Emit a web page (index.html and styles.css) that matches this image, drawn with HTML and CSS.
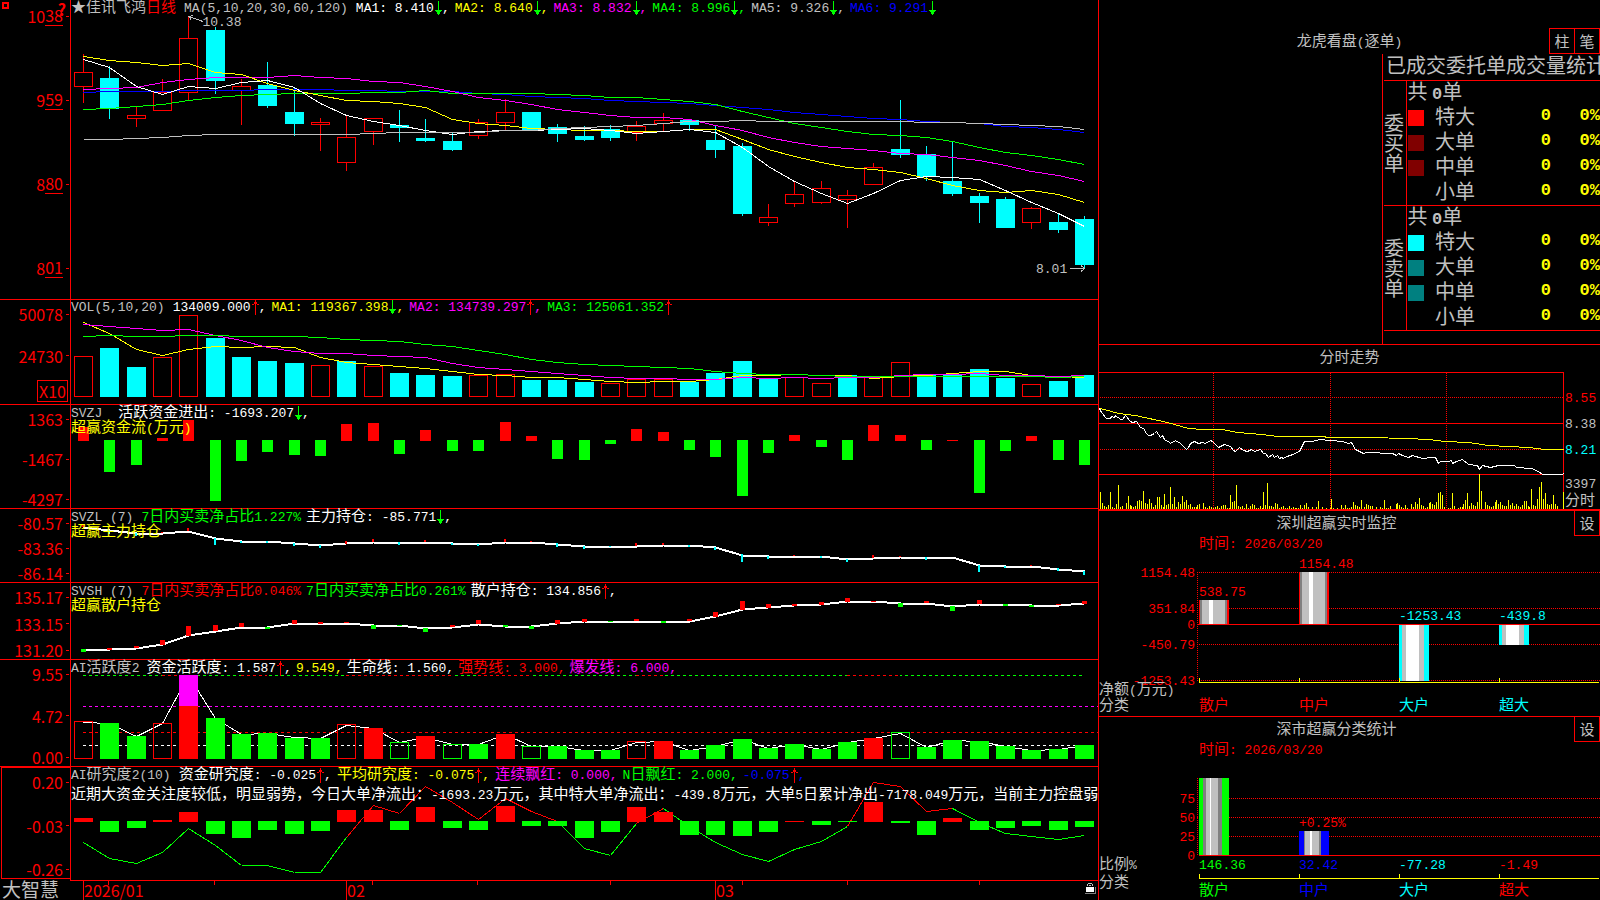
FILE: index.html
```html
<!DOCTYPE html>
<html lang="zh-CN">
<head>
<meta charset="utf-8">
<title>佳讯飞鸿 日线</title>
<link rel="stylesheet" href="styles.css">
</head>
<body>
<svg class="defs" aria-hidden="true">
  <symbol id="down" viewBox="0 0 8 15"><path class="s-green" d="M4.5 0V14M1 9.5H8M2 10.5H7M3 11.5H6M3 12.5H6"/></symbol>
  <symbol id="up" viewBox="0 0 8 15"><path class="s-red" d="M4.5 0V15M3 2.500H6M3 3.500H6M1 4.500H3M6 4.500H8"/></symbol>
</svg>
<div class="screen">
  <main class="charts">
    <section class="panel">
      <div class="axis axis-main">
        <span class="pin"></span><span class="help">?</span>
        <span class="tick low">10<u>38</u></span><span class="tick low">9<u>59</u></span><span class="tick low">8<u>80</u></span><span class="tick low">8<u>01</u></span>
      </div>
      <div class="plot">
        <svg id="kline" viewBox="71 0 1027 299" preserveAspectRatio="none"></svg>
        <div class="head">
          <div class="row"><span class="title silver"><span class="zh">★佳讯飞鸿<span class="red">日线</span></span></span>
            <span class="title silver">MA(5,10,20,30,60,120)</span>
            <span class="white">MA1: 8.410<svg class="arrow"><use href="#down"/></svg>,</span>
            <span class="yellow">MA2: 8.640<svg class="arrow"><use href="#down"/></svg>,</span>
            <span class="magenta">MA3: 8.832<svg class="arrow"><use href="#down"/></svg>,</span>
            <span class="green">MA4: 8.996<svg class="arrow"><use href="#down"/></svg>,</span>
            <span class="silver">MA5: 9.326<svg class="arrow"><use href="#down"/></svg>,</span>
            <span class="blue">MA6: 9.291<svg class="arrow"><use href="#down"/></svg></span></div>
        </div>
        <span class="mark mark-high">10.38</span>
        <span class="mark mark-low">8.01</span>
      </div>
    </section>

    <section class="panel line">
      <div class="axis axis-vol"><span class="tick">50078</span><span class="tick">24730</span><span class="unit">X10</span></div>
      <div class="plot">
        <svg id="vol" viewBox="71 300 1027 104" preserveAspectRatio="none"></svg>
        <div class="head">
          <div class="row row-latin"><span class="title silver">VOL(5,10,20)</span>
            <span class="white">134009.000<svg class="arrow"><use href="#up"/></svg>,</span>
            <span class="yellow">MA1: 119367.398<svg class="arrow"><use href="#down"/></svg>,</span>
            <span class="magenta">MA2: 134739.297<svg class="arrow"><use href="#up"/></svg>,</span>
            <span class="green">MA3: 125061.352<svg class="arrow"><use href="#up"/></svg></span></div>
        </div>
      </div>
    </section>

    <section class="panel line">
      <div class="axis"><span class="tick">1363</span><span class="tick">-1467</span><span class="tick">-4297</span></div>
      <div class="plot">
        <svg id="flow" viewBox="71 405 1027 103" preserveAspectRatio="none"></svg>
        <div class="head">
          <div class="row"><span class="title wide silver">SVZJ</span>
            <span class="white"><span class="zh">活跃资金进出</span>: -1693.207<svg class="arrow"><use href="#down"/></svg>,</span></div>
          <div class="row yellow"><span><span class="zh">超赢资金流</span>(<span class="zh">万元</span>)</span></div>
        </div>
      </div>
    </section>

    <section class="panel line">
      <div class="axis"><span class="tick">-80.57</span><span class="tick">-83.36</span><span class="tick">-86.14</span></div>
      <div class="plot">
        <svg id="hold" viewBox="71 509 1027 73" preserveAspectRatio="none"></svg>
        <div class="head">
          <div class="row"><span class="title silver">SVZL (7)</span>
            <span class="green">7<span class="zh">日内买卖净占比</span>1.227%</span>
            <span class="white"><span class="zh">主力持仓</span>: -85.771<svg class="arrow"><use href="#down"/></svg>,</span></div>
          <div class="row yellow"><span class="zh">超赢主力持仓</span></div>
        </div>
      </div>
    </section>

    <section class="panel line">
      <div class="axis"><span class="tick">135.17</span><span class="tick">133.15</span><span class="tick">131.20</span></div>
      <div class="plot">
        <svg id="retail" viewBox="71 583 1027 76" preserveAspectRatio="none"></svg>
        <div class="head">
          <div class="row"><span class="title silver">SVSH (7)</span>
            <span class="red">7<span class="zh">日内买卖净占比</span>0.046%</span>
            <span class="green">7<span class="zh">日内买卖净占比</span>0.261%</span>
            <span class="white"><span class="zh">散户持仓</span>: 134.856<svg class="arrow"><use href="#up"/></svg>,</span></div>
          <div class="row yellow"><span class="zh">超赢散户持仓</span></div>
        </div>
      </div>
    </section>

    <section class="panel line">
      <div class="axis"><span class="tick">9.55</span><span class="tick">4.72</span><span class="tick">0.00</span></div>
      <div class="plot">
        <svg id="active" viewBox="71 660 1027 106" preserveAspectRatio="none"></svg>
        <div class="head">
          <div class="row row-tight"><span class="title silver">AI<span class="zh">活跃度</span>2</span>
            <span class="white"><span class="zh">资金活跃度</span>: 1.587<svg class="arrow"><use href="#up"/></svg>,</span>
            <span class="yellow">9.549,</span>
            <span class="white"><span class="zh">生命线</span>: 1.560,</span>
            <span class="red"><span class="zh">强势线</span>: 3.000,</span>
            <span class="magenta"><span class="zh">爆发线</span>: 6.000,</span></div>
        </div>
      </div>
    </section>

    <section class="panel line">
      <div class="axis axis-study"><span class="tick">0.20</span><span class="tick">-0.03</span><span class="tick">-0.26</span></div>
      <div class="plot">
        <svg id="study" viewBox="71 767 1027 113" preserveAspectRatio="none"></svg>
        <div class="head head-loose">
          <div class="row"><span class="title silver">AI<span class="zh">研究度</span>2(10)</span>
            <span class="white"><span class="zh">资金研究度</span>: -0.025<svg class="arrow"><use href="#up"/></svg>,</span>
            <span class="yellow"><span class="zh">平均研究度</span>: -0.075<svg class="arrow"><use href="#up"/></svg>,</span>
            <span class="magenta"><span class="zh">连续飘红</span>: 0.000,</span>
            <span class="green">N<span class="zh">日飘红</span>: 2.000,</span>
            <span class="blue">-0.075<svg class="arrow"><use href="#up"/></svg>,</span></div>
          <p class="row white"><span><span class="zh">近期大资金关注度较低，明显弱势，今日大单净流出：</span>-1693.23<span class="zh">万元，其中特大单净流出：</span>-439.8<span class="zh">万元，大单</span>5<span class="zh">日累计净出</span>-7178.049<span class="zh">万元，当前主力控盘弱</span></span></p>
        </div>
      </div>
    </section>

    <footer class="panel">
      <div class="brand">大智慧</div>
      <div class="plot timeline">
        <svg id="dates" viewBox="71 881 1027 19" preserveAspectRatio="none"></svg>
        <div class="months"><span></span><span class="month">2026/01</span><span class="month">02</span><span class="month">03<svg class="lock" viewBox="0 0 11 12"><path class="lock-body" d="M1 5H9V10H1Z"/><path class="lock-arc" d="M2.500 4V2.500L4 1H6L7.500 2.500V4M4 3.500H6"/><path class="lock-shade" d="M0 11.500H10.500V5"/></svg></span></div>
      </div>
    </footer>
  </main>

  <aside class="side">
    <section class="orders">
      <header class="bar bar-orders"><h2 class="caption"><span class="zh">龙虎看盘</span>(<span class="zh">逐单</span>)</h2><div class="tabs"><button>柱</button><button>笔</button></div></header>
      <div class="stats">
        <h3>已成交委托单成交量统计</h3>
        <table>
          <colgroup><col class="col-group"><col class="col-chip"><col class="col-name"><col class="col-count"><col class="col-rate"></colgroup>
          <tbody>
            <tr><th class="group" rowspan="5" scope="rowgroup">委买单</th><td class="sum" colspan="4">共 <b>0</b>单</td></tr>
            <tr><td><i class="chip c-red"></i></td><th scope="row">特大</th><td class="num">0</td><td class="num">0%</td></tr>
            <tr><td><i class="chip c-maroon"></i></td><th scope="row">大单</th><td class="num">0</td><td class="num">0%</td></tr>
            <tr><td><i class="chip c-maroon"></i></td><th scope="row">中单</th><td class="num">0</td><td class="num">0%</td></tr>
            <tr><td></td><th scope="row">小单</th><td class="num">0</td><td class="num">0%</td></tr>
          </tbody>
          <tbody>
            <tr><th class="group" rowspan="5" scope="rowgroup">委卖单</th><td class="sum" colspan="4">共 <b>0</b>单</td></tr>
            <tr><td><i class="chip c-cyan"></i></td><th scope="row">特大</th><td class="num">0</td><td class="num">0%</td></tr>
            <tr><td><i class="chip c-teal"></i></td><th scope="row">大单</th><td class="num">0</td><td class="num">0%</td></tr>
            <tr><td><i class="chip c-teal"></i></td><th scope="row">中单</th><td class="num">0</td><td class="num">0%</td></tr>
            <tr><td></td><th scope="row">小单</th><td class="num">0</td><td class="num">0%</td></tr>
          </tbody>
        </table>
      </div>
    </section>

    <section class="box line">
      <header class="bar bar-set"><h2 class="caption zh">分时走势</h2></header>
      <svg id="intraday" viewBox="1099 370 501 139"></svg>
    </section>

    <section class="box line line-thick">
      <header class="bar bar-set"><h2 class="caption zh">深圳超赢实时监控</h2><button>设</button></header>
      <svg id="monitor" viewBox="1099 536 501 180"></svg>
    </section>

    <section class="box line">
      <header class="bar bar-set"><h2 class="caption zh">深市超赢分类统计</h2><button>设</button></header>
      <svg id="stat" viewBox="1099 742 501 158"></svg>
    </section>
  </aside>
</div>
<script src="charts.js"></script>
</body>
</html>
```
FILE: styles.css
```css
* { box-sizing: border-box; }
body {
  margin: 0;
  background: #000;
  color: #c0c0c0;
  font: 13px/15px "Liberation Mono", "Noto Sans CJK SC", monospace;
}
h2, h3, p { margin: 0; font-weight: normal; }
button {
  width: 26px;
  height: 26px;
  padding: 0;
  border: 1px solid #f00;
  background: #000;
  color: #c0c0c0;
  font: 15px/20px "Noto Sans CJK SC", sans-serif;
}
button + button { margin-left: -1px; }
.defs { position: absolute; width: 0; height: 0; }
.zh { font-family: "Noto Sans CJK SC", sans-serif; font-size: 15px; }

.red { color: #f00; }
.white { color: #fff; }
.yellow { color: #ff0; }
.magenta { color: #f0f; }
.green { color: #0f0; }
.blue { color: #00f; }
.silver { color: #c0c0c0; }

.screen {
  display: grid;
  grid-template-columns: 1099fr 501fr;
  grid-template-rows: minmax(0, 1fr);
  height: 100vh;
  min-height: 880px;
  overflow: hidden;
}
.charts {
  display: grid;
  grid-template-rows: 299fr 105fr 104fr 74fr 77fr 107fr 114fr 20fr;
  min-width: 0;
  min-height: 0;
  border-right: 1px solid #f00;
}
.panel {
  display: grid;
  grid-template-columns: 70px minmax(0, 1fr);
  grid-template-rows: minmax(0, 1fr);
  min-height: 0;
}
.line { border-top: 1px solid #f00; }
.line-thick { border-top-width: 2px; }

.axis {
  position: relative;
  display: flex;
  flex-direction: column;
  justify-content: space-between;
  align-items: flex-end;
  min-height: 0;
  padding-top: 5px;
  color: #f00;
  font: 16px/18px "Noto Sans CJK SC", sans-serif;
}
.tick { display: flex; align-items: center; height: 18px; }
.tick::after { content: ""; width: 3px; height: 1px; margin: 0 1px 0 3px; background: #f00; }
.tick u { text-decoration: none; }
.low u { border-bottom: 1px solid #f00; height: 20px; }
.axis-main { padding: 7px 0 22px; }
.axis-vol { padding-bottom: 2px; }
.axis-vol .tick + .tick { margin-top: 8px; }
.axis-study { margin: 0 0 1px 1px; border: 1px solid #f00; border-right-width: 0; }
.unit { border: 1px solid #f00; padding: 1px 1px; height: 22px; margin-right: 2px; }
.pin { position: absolute; left: 2px; top: 2px; width: 7px; height: 7px; border: 2px solid #f00; }
.help { position: absolute; right: 4px; top: 0; font-weight: bold; }

.plot {
  position: relative;
  display: grid;
  grid-template-rows: minmax(0, 1fr);
  min-width: 0;
  min-height: 0;
  overflow-x: clip;
  border-left: 1px solid #f00;
}
.plot > * { grid-area: 1 / 1; }
.plot > svg { width: 100%; height: 100%; min-height: 0; }
.head { min-width: 0; }
.row { display: flex; gap: 5px; height: 15px; white-space: nowrap; align-items: baseline; line-height: 12px; }
.row-tight { gap: 4px; }
.row-latin { line-height: 16px; }
.head-loose p { margin-top: 5px; }
.title { margin-right: 3px; }
.wide { margin-right: 11px; }
.arrow { width: 8px; height: 15px; margin: -3px 0; vertical-align: -1px; }
.mark { position: absolute; color: #c0c0c0; }
.mark-high { left: 12.800%; top: 5%; }
.mark-low { right: 3%; top: 87.500%; }

.brand { font: 19px/18px "Noto Sans CJK SC", sans-serif; padding-left: 2px; }
.timeline { border-left: 0; border-top: 1px solid #f00; }
.months { display: grid; grid-template-columns: 13fr 263fr 369fr 383fr; }
.month {
  display: flex;
  justify-content: space-between;
  border-left: 1px solid #f00;
  color: #f00;
  font: 16px/18px "Noto Sans CJK SC", sans-serif;
}
.lock { width: 11px; height: 12px; margin: 1px 2px 0 0; }
.lock-body { fill: #fff; }
.lock-arc, .lock-shade { fill: none; stroke: #c0c0c0; }
.lock-shade { stroke: #808080; }

.side {
  display: grid;
  grid-template-rows: 344fr 165fr 207fr 184fr;
  min-width: 0;
  min-height: 0;
}
.caption { text-align: center; font-size: 13px; flex: 1; }
.caption.zh { font-size: 15px; }
.bar { display: flex; height: 25px; align-items: center; }
.bar-set { align-items: flex-start; }
.bar-set .caption { line-height: 22px; }
.bar-set button { margin-top: -1px; }
.bar-orders { position: relative; margin-top: 28px; height: 26px; }
.tabs { position: absolute; right: 0; top: 0; display: flex; }
.box { display: flex; flex-direction: column; min-height: 0; }
.box > svg { flex: 1; width: 100%; min-height: 0; }
.orders { display: flex; flex-direction: column; min-height: 0; }
.stats { flex: 1; width: 218px; min-height: 0; margin-left: auto; border-left: 1px solid #f00; overflow-x: clip; }
.stats h3 { padding-left: 3px; height: 26px; font: 20px/22px "Noto Sans CJK SC", sans-serif; white-space: nowrap; }
.stats table { width: 216px; margin-left: 1px; border-collapse: collapse; table-layout: fixed; font: 20px/20px "Noto Sans CJK SC", sans-serif; }
.stats tbody { border-top: 1px solid #f00; border-bottom: 1px solid #f00; }
.stats th, .stats td { padding: 0 0 4px; font-weight: normal; text-align: left; height: 25px; line-height: 20px; vertical-align: middle; white-space: nowrap; }
.col-group { width: 22px; }
.col-chip { width: 29px; }
.col-name { width: 60px; }
.col-count { width: 56px; }
.col-rate { width: 49px; }
.stats .group { padding: 0 1px 0 0; white-space: normal; border-right: 1px solid #f00; }
.stats .sum { padding-left: 1px; }
.stats b { font: bold 17px/1px "Liberation Mono", monospace; }
.stats .num { padding-bottom: 4px; color: #ff0; text-align: right; font: bold 17px/20px "Liberation Mono", monospace; }
.chip { display: block; width: 16px; height: 16px; margin-top: 3px; margin-left: 1px; }
.c-red { background: #f00; }
.c-maroon { background: #800000; }
.c-cyan { background: #0ff; }
.c-teal { background: #008080; }

svg { display: block; }
.row svg { display: inline-block; }
.plot svg *, .box svg * { shape-rendering: crispEdges; }
.s-red, .s-green, .s-blue, .s-cyan, .s-white, .s-yellow, .s-magenta, .s-silver { fill: none; stroke-width: 1; }
.s-red { stroke: #f00; }
.s-green { stroke: #0f0; }
.s-blue { stroke: #00f; }
.s-cyan { stroke: #0ff; }
.s-white { stroke: #fff; }
.s-yellow { stroke: #ff0; }
.s-magenta { stroke: #f0f; }
.s-silver { stroke: #c0c0c0; }
.thick { stroke-width: 2; }
.dash { stroke-dasharray: 3 3; }
.dot { stroke-dasharray: 1 1; }
.f-red { fill: #f00; }
.f-green { fill: #0f0; }
.f-blue { fill: #00f; }
.f-cyan { fill: #0ff; }
.f-white { fill: #fff; }
.f-magenta { fill: #f0f; }
.f-silver { fill: #c0c0c0; }
.f-gray { fill: #808080; }
.f-yellow { fill: #ff0; }
.end { text-anchor: end; }
```
FILE: charts.js
```js
// Series values are stored in thirds of a unit, relative to each chart's origin.
const X0 = 83, STEP = 26.345;
const cx = i => Math.round(X0 + STEP * i);
const list = s => s.trim().split(/\s+/);
const COLOR = { r: 'red', g: 'green', c: 'cyan', w: 'white', y: 'yellow', m: 'magenta', b: 'blue', s: 'silver', d: 'gray' };
const rect = (x, y, w, h, k) => `<rect class="f-${COLOR[k]}" x="${x}" y="${y}" width="${w}" height="${h}"/>`;
const frame = (x, y, w, h, k) => `<rect class="s-${COLOR[k]}" x="${x + 0.5}" y="${y + 0.5}" width="${w - 1}" height="${Math.max(h - 1, 1)}"/>`;
const path = (d, k, extra = '') => `<path class="s-${COLOR[k]} ${extra}" d="${d}"/>`;
const hline = (x1, x2, y, k, extra) => path(`M${x1} ${y + 0.5}H${x2}`, k, extra);
const vline = (x, y1, y2, k, extra) => path(`M${x + 0.5} ${y1}V${y2}`, k, extra);
const text = (x, y, s, k, extra = '') => {
  const body = s.replace(/[\u4e00-\u9fff]+/g, m => `<tspan class="zh">${m}</tspan>`);
  return `<text class="f-${COLOR[k]} ${extra}" x="${x}" y="${y + 4}">${body}</text>`;
};
const scale = (v, origin) => origin + Math.round(v / 3);
const curve = (values, origin, k, extra) =>
  path('M' + list(values).map((v, i) => `${cx(i) + 0.5} ${scale(v, origin) + 0.5}`).join('L'), k, extra);
const put = (id, s) => { document.getElementById(id).innerHTML = s; };

// Candles: colour, body top, body bottom, high, low
const candles = list(`r,216,260,162,309 c,234,327,198,357 r,345,356,320,381 r,276,332,237,332 r,114,278,48,300
c,90,243,80,282 r,258,272,237,375 c,255,318,186,324 c,336,372,260,408 r,366,374,354,453 r,411,488,348,513
r,354,395,354,435 c,375,384,330,426 c,414,423,357,426 c,423,450,398,453 r,366,407,357,417 r,337,368,297,391
c,336,390,336,390 c,381,402,372,426 c,408,420,378,423 c,387,414,375,423 r,378,399,363,423 r,360,372,339,395
c,360,375,357,393 c,420,450,375,474 c,438,642,429,648 r,651,669,612,678 r,582,611,543,621 r,564,608,543,612
r,585,600,570,684 r,501,554,489,554 c,447,465,300,474 c,462,530,438,543 c,543,582,423,588 c,588,609,579,669
c,597,684,591,684 r,624,668,621,687 c,666,690,642,699 c,657,795,648,806`);
let out = candles.map((s, i) => {
  const [k, ...n] = s.split(',');
  const [top, bot, hi, lo] = n.map(v => scale(v, 0));
  const x = cx(i);
  const wick = vline(x, hi, top, k) + vline(x, bot, lo, k);
  return wick + (k === 'c' ? rect(x - 9, top, 19, bot - top, k) : frame(x - 9, top, 19, bot - top, k));
}).join('');
out += curve('277 274 274 272 271 271 269 268 268 268 269 270 272 272 273 279 281 287 290 295 299 302 307 310 316 322 328 335 341 349 354 358 364 367 370 377 381 388 397', 0, 'b');
out += curve('328 323 319 313 301 292 286 281 280 280 278 277 275 271 278 280 280 280 281 284 290 292 296 302 313 333 350 370 380 392 401 406 412 422 440 455 466 478 493', 0, 'g');
out += curve('266 263 260 247 236 232 230 230 226 230 235 243 247 259 272 290 301 313 328 337 346 350 352 356 374 390 411 425 437 445 451 458 463 472 479 496 512 526 544', 0, 'm');
out += curve('169 181 187 196 190 217 223 248 269 284 300 304 310 322 357 370 376 385 388 391 391 394 394 388 388 416 448 467 485 500 508 517 535 554 571 575 571 583 607', 0, 'y');
out += curve('176 200 258 281 257 263 247 241 260 308 344 362 376 389 403 394 391 391 387 384 390 400 394 388 395 440 497 542 578 608 578 541 529 532 536 571 605 638 678', 0, 'w');
out += curve('418 416 415 411 406 403 403 402 401 401 401 400 397 397 397 396 391 391 385 382 379 374 368 364 362 361 362 364 364 364 364 364 367 367 370 373 376 379 388', 0, 's');
out += path('M188.500 16.500L203 21.500M188.500 16.500L191 19.500M188.500 16.500L193 15.500', 's');
out += path('M1070 268.500H1084M1081 265.500L1084.500 268.500L1081 271.500', 's');
put('kline', out);

// Volume
out = list(`r183 c159 c216 r186 r60 c129 c186 c198 c204 r210 c198 r213 c234 c240 c243 r240 r237 c255 c255 c261 r264 r252 r252
c261 c234 c198 c250 r247 r264 c240 r247 r201 c240 c237 c222 c249 r267 c258 c240`).map((s, i) => {
  const k = s[0], top = scale(s.slice(1), 295), x = cx(i) - 9;
  return k === 'c' ? rect(x, top, 19, 397 - top, k) : frame(x, top, 19, 397 - top, k);
}).join('');
out += curve('82 114 162 181 163 152 157 154 157 187 200 206 214 220 227 236 241 245 247 253 257 260 257 259 253 241 241 238 241 241 250 242 241 233 229 229 241 244 247', 295, 'y');
out += curve('88 92 98 106 103 119 134 156 169 175 175 179 183 187 203 217 223 229 234 240 245 250 250 253 253 247 250 247 250 247 245 241 238 236 235 241 241 244 241', 295, 'm');
out += curve('124 121 122 124 121 121 122 124 124 127 133 136 139 146 154 166 178 193 202 206 211 214 217 220 229 233 236 238 241 244 244 244 244 244 244 244 244 247 244', 295, 'g');
put('vol', out);

// Bars hanging from or standing on a zero line
const signed = (values, origin, base, width) => list(values).map((s, i) => {
  const k = s[0], v = scale(s.slice(1), origin), x = cx(i) - (width - 1) / 2;
  return k === 'r' ? rect(x, v, width, Math.max(base + 1 - v, 1), k) : rect(x, base, width, Math.max(v - base, 1), k);
}).join('');
put('flow', signed(`r396 g531 g510 r429 r375 g618 g498 g471 g480 g483 r387 r384 g477 r405 g468 g468 r381 r423 g492 g495 g447 r402 r411
g465 g486 g603 g474 r420 g456 g495 r390 r420 g465 r435 g594 g468 r423 g495 g510`, 295, 440, 11));

// Main-force holding
out = curve('695 706 714 713 707 728 737 739 745 750 745 740 741 741 745 747 741 741 747 753 753 752 750 751 757 779 783 783 783 792 788 786 786 786 809 813 813 821 828', 295, 'w', 'thick');
out += list(`r,688,695 c,706,716 c,714,724 r,711,713 r,699,707 c,728,750 c,737,744 c,739,744 c,745,753 c,750,759 r,738,747 r,732,740 c,741,750 r,735,741
c,745,750 c,747,753 r,732,741 r,737,741 c,744,756 c,753,762 c,753,756 r,743,752 r,743,750 c,750,756 c,757,765 c,777,801 c,783,792 r,780,783
c,783,789 c,792,801 r,779,788 r,783,786 c,786,795 w,786,789 c,809,831 c,813,819 r,810,813 c,820,828 c,828,840`).map((s, i) => {
  const [k, a, b] = s.split(',');
  return rect(cx(i) - 1, scale(a, 295), 2, scale(b, 295) - scale(a, 295), k);
}).join('');
put('hold', out);

// Retail holding
out = curve('208 207 203 193 165 152 140 142 129 129 128 134 136 144 140 131 137 138 130 124 123 123 123 122 108 88 82 76 73 64 63 69 69 79 71 73 75 75 70', 580, 'w', 'thick');
out += list(`g,207,216 r,204,209 r,198,204 r,180,195 r,138,167 r,135,153 r,129,141 g,141,147 r,120,132 r,126,131 r,126,129 g,135,147 g,134,137
g,144,156 r,135,141 r,120,132 g,135,140 g,138,147 r,120,132 r,117,125 g,123,126 r,117,123 g,123,129 r,117,123 r,96,111 r,63,90 r,72,83 r,72,78
r,66,75 r,54,66 r,63,66 g,69,81 r,63,69 g,78,93 r,60,72 g,72,78 g,75,81 r,72,75 r,63,72`).map((s, i) => {
  const [k, a, b] = s.split(',');
  return rect(cx(i) - 2, scale(a, 580), 5, scale(b, 580) - scale(a, 580), k);
}).join('');
put('retail', out);

// Activity: upper-case letters are filled bars, lower-case are hollow
out = hline(83, 1085, 675, 'g', 'dash');
out += [[6, 7], [10, 14], [15, 17], [21, 22], [29, 31], [3, 4]].map(([a, b]) =>
  `<path stroke="#000" d="M${cx(a)} 675.500H${cx(b)}"/>` + hline(cx(a), cx(b), 675, 'r', 'dash')).join('');
out += hline(83, 1098, 706, 'm', 'dash') + hline(83, 1098, 732, 'r', 'dash') + hline(83, 1085, 745, 'w', 'dash');
out += curve('425 430 468 430 285 414 462 460 472 474 434 444 486 470 492 493 462 497 498 511 511 487 484 510 497 478 503 492 506 487 475 459 500 480 484 498 511 507 496', 580, 'w');
out += list(`r424 G429 G468 r430 R378 G414 G462 G459 G474 G474 r432 R444 g486 R468 g492 G492 R462 g498 G498 G510 G510 r483 R483
G510 G495 G477 G504 G492 G507 G486 R474 g457 G501 G480 G483 G498 G510 G507 G495`).map((s, i) => {
  const k = s[0], low = k.toLowerCase(), top = scale(s.slice(1), 580), x = cx(i) - 9;
  return k === low ? frame(x, top, 19, 759 - top, k) : rect(x, top, 19, 759 - top, low);
}).join('');
out += rect(cx(4) - 9, 675, 19, 31, 'm');
put('active', out);

// Research degree: the line changes colour by segment
const study = list('787 834 848 817 745 796 856 856 877 877 772 676 700 619 666 717 655 694 722 804 826 730 683 738 787 823 844 808 783 737 607 617 694 685 727 760 769 778 766');
const isRed = i => (i >= 10 && i < 18) || i === 21 || (i >= 29 && i < 33);
out = study.slice(1).map((v, i) => path(`M${cx(i) + 0.5} ${scale(study[i], 580) + 0.5}L${cx(i + 1) + 0.5} ${scale(v, 580) + 0.5}`, isRed(i) ? 'r' : 'g')).join('');
out += signed(`r714 g756 g744 r720 r696 g762 g774 g750 g762 g753 r690 r690 g750 r681 g744 g750 r678 g738 g738 g774 g756 r681 r696
g765 g765 g768 g756 r723 g735 g726 r666 g729 g765 r714 g750 g744 g738 g750 g741`, 580, 821, 19);
put('study', out);

put('dates', [1, 5, 11, 15, 20, 25, 29, 34].map(i => vline(cx(i), 881, 885, 'r')).join(''));

// Intraday price and volume
const trace = (s, k) => path('M' + list(s).map(p => p.split(',')).map(([x, y]) => `${scale(x, 1095) + 0.5} ${scale(y, 340) + 0.5}`).join('L'), k);
out = hline(1099, 1563, 372, 'r') + vline(1563, 372, 509, 'r') + hline(1099, 1563, 423, 'r') + hline(1099, 1563, 474, 'r');
out += hline(1100, 1563, 397, 'r', 'dot') + hline(1100, 1563, 449, 'r', 'dot');
out += [1213, 1330, 1446].map(x => vline(x, 373, 509, 'r', 'dot')).join('');
out += trace('12,203 26,207 70,219 120,224 215,245 280,264 320,268 382,268 425,276 500,282 545,289 680,289 700,292 820,292 935,295 1000,298 1050,303 1120,307 1180,315 1300,320 1350,327 1405,328', 'y');
out += trace(`12,203 18,216 34,234 44,234 48,228 56,231 60,226 66,232 70,230 76,236 82,238 90,226 104,242 110,246 122,244 134,262 144,264 152,278 158,284 164,286
176,280 182,274 194,290 200,284 206,298 222,306 226,309 240,300 256,308 272,328 278,322 284,310 296,304 310,309 320,306 330,308 344,300 350,304 370,320 386,312 406,318 414,330 420,332 432,322
444,330 456,332 468,328 478,333 496,328 504,338 510,340 518,352 532,342 538,352 546,346 552,354 558,350 564,354 574,348 584,344 612,332 628,302 650,303 672,297 740,302 758,308 768,306
780,326 804,340 812,335 890,340 904,346 910,340 920,346 938,350 950,346 980,354 1008,352 1020,352 1030,368 1036,364 1060,364 1068,360 1072,370 1084,364 1100,358 1120,372 1146,376
1153,388 1162,374 1186,380 1210,374 1256,374 1264,382 1308,384 1330,392 1340,403 1370,401 1384,403 1400,403 1405,400`, 'w');
const spikes = (s, origin) => list(s).map(p => p.split(',')).map(([x, h]) => rect(Math.floor(x / 3) + origin, 509 - h, 1, +h, 'y')).join('');
out += spikes(`7,17 13,6 19,3 25,2 31,4 37,17 43,2 49,1 55,5 61,24 67,2 73,3 85,6 91,13 97,4 101,3 106,2 112,3 118,8 124,9 130,8 136,18 142,6 148,5 154,10
160,6 166,2 172,4 178,12 184,12 190,4 196,2 199,15 205,4 211,5 217,22 223,5 229,12 235,2 241,7 247,5 253,13 259,7 265,9 271,4 277,5 283,2 289,2 295,2
298,4 304,5 316,6 322,2 328,1 334,3 340,2 346,1 352,2 358,3 364,1 370,3 376,4 382,4 388,1 394,1 397,14 403,7 409,8 415,24 421,3 427,2 433,3 439,1
445,5 451,1 457,3 463,5 469,4 475,1 481,1 487,3 493,1 496,17 502,4 508,26 514,3 520,3 526,2 532,6 538,5 544,1 550,2 556,3 562,1 568,1 574,3 580,1
586,2 592,1 595,1 601,1 607,4 613,1 619,4 625,6 631,2 643,2 655,2 661,8 673,2 685,1 697,1`, 1098);
out += spikes(`4,10 10,1 22,1 34,4 40,1 46,4 52,1 58,1 64,2 70,7 76,4 82,3 88,2 94,9 102,2 109,5 115,4 121,3 127,3 139,2 151,2 157,1 163,9 169,1 175,1 181,3
199,5 202,6 208,4 214,2 220,1 226,4 232,1 244,5 250,2 256,7 262,5 268,11 274,4 280,3 286,1 292,2 298,6 301,7 307,5 313,4 319,7 325,16 331,17 337,14
343,2 355,1 361,1 367,16 373,3 385,1 391,2 397,2 400,5 406,9 412,16 418,3 424,6 430,4 436,3 442,7 448,35 454,18 466,7 472,4 478,3 484,2 490,3 496,7
499,9 505,5 511,7 517,4 523,3 529,3 535,9 541,4 547,6 553,3 559,5 565,3 571,2 577,4 583,8 589,8 595,3 598,2 604,20 610,4 616,3 622,10 628,22 634,27
640,10 646,16 652,5 658,4 664,5 670,14 676,5 682,3 700,17`, 1330);
out += text(1565, 398, '8.55', 'r') + text(1565, 424, '8.38', 's') + text(1565, 450, '8.21', 'c') + text(1565, 484, '3397', 's') + text(1565, 501, '分时', 's');
put('intraday', out);

// Column with vertical shading; stops are [colour, width] pairs
const column = (x, y, h, stops) => stops.map(([k, w]) => { const s = rect(x, y, w, h, k); x += w; return s; }).join('');
const XS = [1199, 1299, 1399, 1499];
const redStops = [['r', 1], ['d', 2], ['s', 7], ['w', 4], ['s', 12], ['d', 2], ['r', 2]];
const cyanStops = [['c', 3], ['s', 4], ['w', 13], ['s', 5], ['c', 5]];
const base = y => hline(1199, 1599, y, 'y') + XS.map(x => vline(x, y - 4, y, 'y')).join('');

out = text(1199, 544, '时间: 2026/03/20', 'r');
out += [572, 608, 644, 680].map(y => hline(1197, 1600, y, 'r', 'dot')).join('') + vline(1197, 572, 680, 'r', 'dot') + hline(1197, 1600, 624, 'r');
out += column(1199, 600, 24, redStops) + column(1299, 572, 52, redStops) + column(1399, 625, 56, cyanStops) + column(1499, 625, 20, cyanStops);
out += [['1154.48', 573], ['351.84', 609], ['0', 625], ['-450.79', 645], ['-1253.43', 681]].map(([s, y]) => text(1195, y, s, 'r', 'end')).join('');
out += text(1199, 592, '538.75', 'r') + text(1299, 564, '1154.48', 'r') + text(1399, 616, '-1253.43', 'c') + text(1499, 616, '-439.8', 'c');
out += base(682) + text(1099, 690, '净额(万元)', 's') + text(1099, 706, '分类', 's');
out += ['散户', '中户', '大户', '超大'].map((s, i) => text(XS[i], 706, s, 'rrcc'[i])).join('');
put('monitor', out);

out = text(1199, 750, '时间: 2026/03/20', 'r');
out += [798, 817, 836].map(y => hline(1197, 1600, y, 'r', 'dot')).join('') + vline(1197, 778, 855, 'r', 'dot') + hline(1199, 1600, 855, 'r');
out += column(1199, 778, 77, [['g', 4], ['d', 3], ['s', 4], ['w', 1], ['s', 7], ['d', 4], ['g', 7]]);
out += column(1299, 831, 24, [['b', 5], ['d', 1], ['s', 5], ['w', 2], ['s', 7], ['d', 2], ['b', 8]]);
out += [['75', 799], ['50', 818], ['25', 837], ['0', 856]].map(([s, y]) => text(1195, y, s, 'r', 'end')).join('');
out += text(1299, 823, '+0.25%', 'r') + base(878) + text(1099, 865, '比例%', 's') + text(1099, 883, '分类', 's');
out += ['146.36', '32.42', '-77.28', '-1.49'].map((s, i) => text(XS[i], 865, s, 'gbcr'[i])).join('');
out += ['散户', '中户', '大户', '超大'].map((s, i) => text(XS[i], 891, s, 'gbcr'[i])).join('');
put('stat', out);
```
